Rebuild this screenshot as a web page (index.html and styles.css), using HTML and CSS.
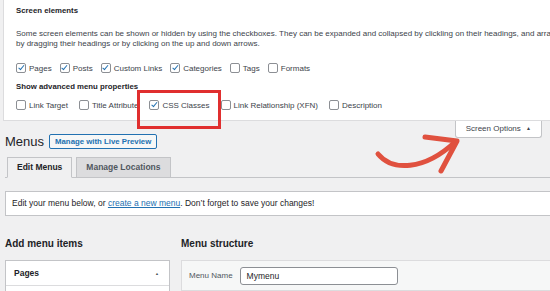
FILE: index.html
```html
<!DOCTYPE html>
<html>
<head>
	<meta charset="utf-8">
	<link rel="stylesheet" href="styles.css">
</head>
<body>
	<div class="page">
		<!-- screen options panel -->
		<div class="screen-meta">
			<h5 class="meta-title">Screen elements</h5>
			<p class="meta-text">Some screen elements can be shown or hidden by using the checkboxes. They can be expanded and collapsed by clickling on their headings, and arranged<br>by dragging their headings or by clicking on the up and down arrows.</p>
			<div class="check-row">
				<label class="check"><span class="box on"></span>Pages</label>
				<label class="check"><span class="box on"></span>Posts</label>
				<label class="check"><span class="box on"></span>Custom Links</label>
				<label class="check"><span class="box on"></span>Categories</label>
				<label class="check"><span class="box"></span>Tags</label>
				<label class="check"><span class="box"></span>Formats</label>
			</div>
			<h5 class="meta-title meta-sub">Show advanced menu properties</h5>
			<div class="check-row">
				<label class="check"><span class="box"></span>Link Target</label>
				<label class="check"><span class="box"></span>Title Attribute</label>
				<label class="check"><span class="box on"></span>CSS Classes</label>
				<label class="check"><span class="box"></span>Link Relationship (XFN)</label>
				<label class="check"><span class="box"></span>Description</label>
			</div>
		</div>

		<div class="meta-links">
			<button class="meta-toggle">Screen Options <span class="caret">&#9650;</span></button>
		</div>

		<div class="wrap">
			<div class="title-row">
				<h1 class="page-title">Menus</h1>
				<a class="title-action" href="#">Manage with Live Preview</a>
			</div>

			<div class="tabs">
				<a class="tab active" href="#">Edit Menus</a>
				<a class="tab" href="#">Manage Locations</a>
			</div>

			<div class="notice">
				Edit your menu below, or <a href="#">create a new menu</a>. Don’t forget to save your changes!
			</div>

			<div class="columns">
				<div class="col-left">
					<h2 class="col-title">Add menu items</h2>
					<div class="acc">
						<div class="acc-head">Pages <span class="acc-caret">&#9650;</span></div>
					</div>
				</div>
				<div class="col-right">
					<h2 class="col-title">Menu structure</h2>
					<div class="struct">
						<div class="struct-head">
							<span class="name-label">Menu Name</span>
							<span class="name-input">Mymenu</span>
						</div>
					</div>
				</div>
			</div>
		</div>

		<!-- annotation overlays -->
		<div class="highlight"></div>
		<svg class="arrow" width="110" height="60" viewBox="360 125 110 60">
			<path d="M378,154 C392,171 424,171 455,142" fill="none" stroke="#e0513f" stroke-width="5" stroke-linecap="round"/>
			<path d="M425,137 L457,141 L441,171" fill="none" stroke="#e0513f" stroke-width="5" stroke-linecap="round" stroke-linejoin="round"/>
		</svg>
	</div>
</body>
</html>
```

FILE: styles.css
```css
html, body {
	margin: 0;
	padding: 0;
	width: 100%;
	height: 100%;
	overflow: hidden;
}

body {
	background-color: #f0f0f1;
	font-family: "Liberation Sans", Arial, sans-serif;
	font-size: 8.5px;
	color: #3c434a;
}

.page {
	position: relative;
	width: 550px;
	height: 291px;
	overflow: hidden;
}

/* screen options */
.screen-meta {
	margin-left: 3px;
	margin-right: -20px;
	padding: 6px 0 9px 12px;
	background: #fff;
	border-left: 1px solid #dcdcde;
	border-bottom: 1px solid #dcdcde;
}
.meta-title {
	margin: 0;
	font-size: 7.8px;
	line-height: 10px;
	font-weight: bold;
	color: #1d2327;
}
.meta-sub {
	margin-top: 8px;
}
.meta-text {
	margin: 13px 0 13px 0;
	font-size: 8px;
	line-height: 10px;
	white-space: nowrap;
}
.check-row {
	display: flex;
	gap: 8px;
	height: 12px;
	align-items: center;
	font-size: 8px;
}
.meta-sub + .check-row {
	margin-top: 7px;
	gap: 11px;
}
.check {
	display: flex;
	align-items: center;
	gap: 3px;
	white-space: nowrap;
}
.box {
	position: relative;
	width: 8px;
	height: 8px;
	border: 1px solid #8c8f94;
	border-radius: 2px;
	background: #fff;
}
.box.on::after {
	content: '';
	position: absolute;
	left: 2.5px;
	top: 0px;
	width: 2px;
	height: 4.5px;
	border: solid #2271b1;
	border-width: 0 1.5px 1.5px 0;
	transform: rotate(40deg);
}

.meta-links {
	float: right;
	margin-right: 8px;
}
.meta-toggle {
	height: 17px;
	padding: 0 10px 1px 10px;
	background: #fff;
	border: 1px solid #c3c4c7;
	border-top: none;
	border-radius: 0 0 3px 3px;
	font-family: inherit;
	font-size: 8px;
	color: #3c434a;
}
.caret {
	font-size: 5px;
	margin-left: 3px;
	vertical-align: 1px;
}

/* main content */
.wrap {
	padding-left: 5px;
}
.title-row {
	display: flex;
	align-items: center;
	gap: 5px;
	padding-top: 13px;
	height: 15px;
}
.page-title {
	margin: 0;
	font-size: 13px;
	font-weight: normal;
	color: #1d2327;
}
.title-action {
	display: block;
	height: 13px;
	line-height: 13px;
	padding: 0 5px;
	border: 1px solid #2271b1;
	border-radius: 2px;
	background: #f6f7f7;
	color: #2271b1;
	font-size: 7.8px;
	font-weight: bold;
	text-decoration: none;
}

.tabs {
	display: flex;
	gap: 4px;
	margin-top: 8px;
	padding-left: 2px;
	border-bottom: 1px solid #c3c4c7;
}
.tab {
	height: 19px;
	line-height: 19px;
	padding: 0 9px;
	margin-bottom: -1px;
	border: 1px solid #c3c4c7;
	background: #dcdcde;
	color: #50575e;
	font-weight: bold;
	text-decoration: none;
}
.tab.active {
	background: #f0f0f1;
	color: #1d2327;
	border-bottom-color: #f0f0f1;
}

.notice {
	margin-top: 13px;
	margin-right: -2px;
	height: 23px;
	line-height: 23px;
	padding-left: 6px;
	background: #fff;
	border: 1px solid #c3c4c7;
	color: #1d2327;
}
.notice a {
	color: #2271b1;
}

.columns {
	display: flex;
	gap: 11px;
	margin-top: 21px;
}
.col-left {
	width: 165px;
	flex: none;
}
.col-right {
	flex: 1;
	margin-right: -2px;
}
.col-title {
	margin: 0 0 9px 0;
	font-size: 10px;
	line-height: 14px;
	font-weight: bold;
	color: #1d2327;
}
.acc {
	background: #fff;
	border: 1px solid #c3c4c7;
	height: 60px;
}
.acc-head {
	display: flex;
	justify-content: space-between;
	align-items: center;
	height: 24px;
	padding: 0 10px 0 8px;
	border-bottom: 1px solid #dcdcde;
	font-weight: bold;
	color: #1d2327;
}
.acc-caret {
	font-size: 4px;
	color: #50575e;
}
.struct {
	background: #fff;
	border: 1px solid #dcdcde;
	height: 60px;
}
.struct-head {
	display: flex;
	align-items: center;
	gap: 7px;
	height: 29px;
	padding-left: 7px;
	background: #f6f7f7;
	border-bottom: 1px solid #dcdcde;
}
.name-label {
	font-size: 8px;
	color: #50575e;
}
.name-input {
	display: block;
	width: 150px;
	height: 16px;
	line-height: 16px;
	padding-left: 6px;
	background: #fff;
	border: 1px solid #8c8f94;
	border-radius: 3px;
	color: #1d2327;
}

/* annotations */
.highlight {
	position: absolute;
	left: 137px;
	top: 90px;
	width: 78px;
	height: 33px;
	border: 3px solid #e02f2f;
}
.arrow {
	position: absolute;
	left: 360px;
	top: 125px;
}
```
